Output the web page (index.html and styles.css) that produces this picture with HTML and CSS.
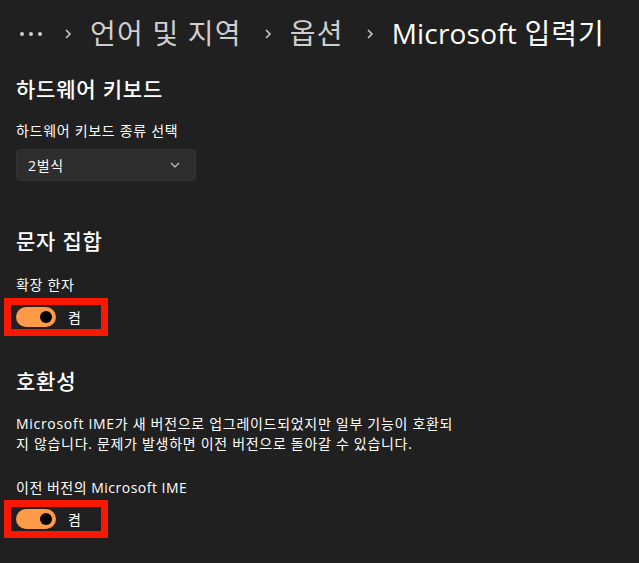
FILE: index.html
```html
<!DOCTYPE html>
<html lang="ko">
<head>
<meta charset="UTF-8">
<meta name="viewport" content="width=device-width, initial-scale=1.0">
<title>Microsoft 입력기</title>
<link rel="stylesheet" href="styles.css">
</head>
<body>

<div class="crumbs">
    <svg class="more" width="22" height="6" viewBox="0 0 22 6"><circle cx="2" cy="3" r="2"/><circle cx="11" cy="3" r="2"/><circle cx="20" cy="3" r="2"/></svg>
    <svg class="sep" width="8" height="12" viewBox="0 0 8 12"><path d="M2 2 L6 6 L2 10"/></svg>
    <span class="crumb">언어 및 지역</span>
    <svg class="sep" width="8" height="12" viewBox="0 0 8 12"><path d="M2 2 L6 6 L2 10"/></svg>
    <span class="crumb">옵션</span>
    <svg class="sep" width="8" height="12" viewBox="0 0 8 12"><path d="M2 2 L6 6 L2 10"/></svg>
    <span class="crumb current">Microsoft <span class="ko">입력기</span></span>
</div>

<div class="page">

    <h2 class="first">하드웨어 키보드</h2>
    <div class="label">하드웨어 키보드 종류 선택</div>
    <div class="select">
        <span>2벌식</span>
        <svg width="10" height="6" viewBox="0 0 10 6"><path d="M1 1 L5 5 L9 1"/></svg>
    </div>

    <h2 class="charset">문자 집합</h2>
    <div class="label gap">확장 한자</div>
    <div class="mark">
        <div class="toggle"><div class="knob"></div></div>
        <span>켬</span>
    </div>

    <h2 class="compat">호환성</h2>
    <p class="desc">Microsoft IME가 새 버전으로 업그레이드되었지만 일부 기능이 호환되<br>지 않습니다. 문제가 발생하면 이전 버전으로 돌아갈 수 있습니다.</p>
    <div class="label old">이전 버전의 Microsoft IME</div>
    <div class="mark low">
        <div class="toggle"><div class="knob"></div></div>
        <span>켬</span>
    </div>

</div>

</body>
</html>
```

FILE: styles.css
```css
body{
    margin:0;
    background:#202020;
    color:#ffffff;
    font-family:"Segoe UI","Open Sans","Noto Sans CJK KR",sans-serif;
}

.crumbs{
    height:66px;
    display:flex;
    align-items:center;
    padding-left:20px;
}

.more{
    fill:#cfcfcf;
    margin-top:2px;
}

.sep{
    fill:none;
    stroke:#c8c8c8;
    stroke-width:1.6;
    margin:2px 18px 0 22px;
}

.crumb{
    font-size:28px;
    line-height:36px;
    color:#cfcfcf;
    letter-spacing:1.2px;
}

.crumb.current{
    color:#ffffff;
    letter-spacing:0.2px;
}

.crumb .ko{
    letter-spacing:1px;
}

.page{
    padding:0 16px;
}

h2{
    margin:0;
    font-size:21px;
    line-height:28px;
    font-weight:500;
    letter-spacing:0.8px;
}

h2.first{
    margin-top:9px;
}

h2.charset{
    margin-top:46px;
}

h2.compat{
    margin-top:31px;
}

.label{
    font-size:14px;
    line-height:20px;
    margin-top:18px;
    letter-spacing:0.7px;
}

.label.gap{
    margin-top:20px;
}

.label.old{
    margin-top:24px;
    letter-spacing:0.5px;
}

.select{
    margin-top:8px;
    width:180px;
    height:32px;
    box-sizing:border-box;
    background:#2d2d2d;
    border:1px solid #333333;
    border-radius:4px;
    display:flex;
    align-items:center;
    justify-content:space-between;
    padding:0 15px 0 11px;
    font-size:14px;
    letter-spacing:0.7px;
}

.select svg{
    fill:none;
    stroke:#c8c8c8;
    stroke-width:1.2;
}

.mark{
    display:flex;
    align-items:center;
    gap:12px;
    width:80px;
    margin:3px 0 0 -12px;
    padding:2px 5px;
    border:7px solid #fb1800;
    font-size:14px;
}

.mark.low{
    margin-top:2px;
}

.toggle{
    width:40px;
    height:20px;
    border-radius:10px;
    background:#ff9a48;
    display:flex;
    align-items:center;
    justify-content:flex-end;
    padding-right:4px;
    box-sizing:border-box;
}

.knob{
    width:12px;
    height:12px;
    border-radius:50%;
    background:#000000;
}

.desc{
    margin:19px 0 0;
    font-size:14px;
    line-height:20px;
    letter-spacing:0.7px;
}
```
